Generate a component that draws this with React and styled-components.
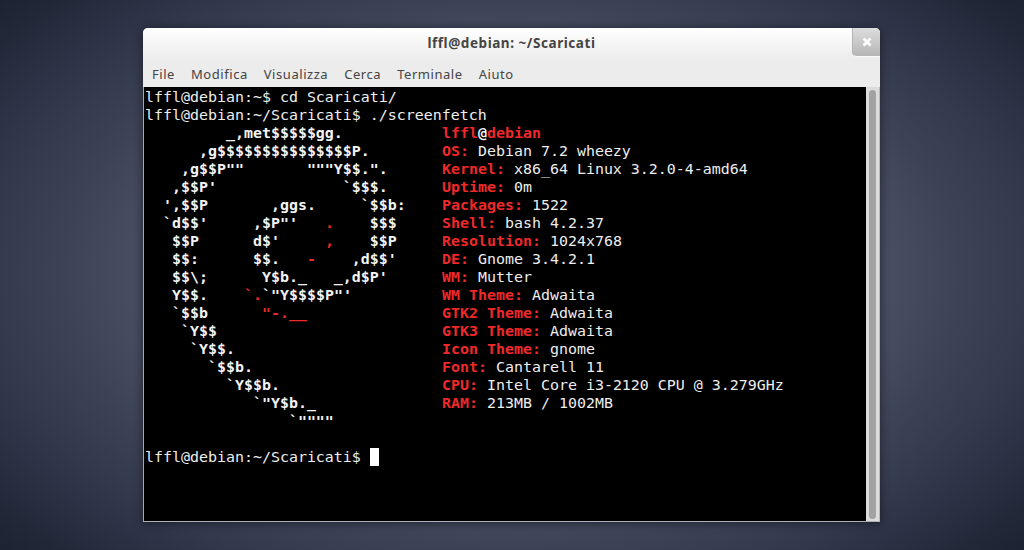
import React from "react";
import styled, { createGlobalStyle } from "styled-components";

const GlobalStyle = createGlobalStyle`
  html, body {
    margin: 0;
    padding: 0;
    width: 1024px;
    height: 550px;
    overflow: hidden;
  }
`;

// w = bold white (logo), r = bold red, n = normal terminal text
const ROWS = [
  { logo: [["w", "         _,met$$$$$gg."]], info: [["r", "lffl"], ["w", "@"], ["r", "debian"]] },
  { logo: [["w", "      ,g$$$$$$$$$$$$$$$P."]], info: [["r", "OS:"], ["n", " Debian 7.2 wheezy"]] },
  { logo: [["w", "    ,g$$P\"\"       \"\"\"Y$$.\"."]], info: [["r", "Kernel:"], ["n", " x86_64 Linux 3.2.0-4-amd64"]] },
  { logo: [["w", "   ,$$P'              `$$$."]], info: [["r", "Uptime:"], ["n", " 0m"]] },
  { logo: [["w", "  ',$$P       ,ggs.     `$$b:"]], info: [["r", "Packages:"], ["n", " 1522"]] },
  { logo: [["w", "  `d$$'     ,$P\"'   "], ["r", "."], ["w", "    $$$"]], info: [["r", "Shell:"], ["n", " bash 4.2.37"]] },
  { logo: [["w", "   $$P      d$'     "], ["r", ","], ["w", "    $$P"]], info: [["r", "Resolution:"], ["n", " 1024x768"]] },
  { logo: [["w", "   $$:      $$.   "], ["r", "-"], ["w", "    ,d$$'"]], info: [["r", "DE:"], ["n", " Gnome 3.4.2.1"]] },
  { logo: [["w", "   $$\\;      Y$b._   _,d$P'"]], info: [["r", "WM:"], ["n", " Mutter"]] },
  { logo: [["w", "   Y$$.    "], ["r", "`."], ["w", "`\"Y$$$$P\"'"]], info: [["r", "WM Theme:"], ["n", " Adwaita"]] },
  { logo: [["w", "   `$$b      "], ["r", "\"-.__"]], info: [["r", "GTK2 Theme:"], ["n", " Adwaita"]] },
  { logo: [["w", "    `Y$$"]], info: [["r", "GTK3 Theme:"], ["n", " Adwaita"]] },
  { logo: [["w", "     `Y$$."]], info: [["r", "Icon Theme:"], ["n", " gnome"]] },
  { logo: [["w", "       `$$b."]], info: [["r", "Font:"], ["n", " Cantarell 11"]] },
  { logo: [["w", "         `Y$$b."]], info: [["r", "CPU:"], ["n", " Intel Core i3-2120 CPU @ 3.279GHz"]] },
  { logo: [["w", "            `\"Y$b._"]], info: [["r", "RAM:"], ["n", " 213MB / 1002MB"]] },
  { logo: [["w", "                `\"\"\"\""]], info: [] },
];

const MENU = ["File", "Modifica", "Visualizza", "Cerca", "Terminale", "Aiuto"];

const Segments = ({ items }) =>
  items.map(([kind, text], i) => (
    <Chunk key={i} $kind={kind}>
      {text}
    </Chunk>
  ));

export default function App() {
  return (
    <Desktop>
      <GlobalStyle />
      <Window>
        <TitleBar>
          <Title>lffl@debian: ~/Scaricati</Title>
          <CloseButton>
            <svg width="10" height="10" viewBox="0 0 10 10">
              <path
                d="M1.5 1.5 L8.5 8.5 M8.5 1.5 L1.5 8.5"
                stroke="#fff"
                strokeWidth="2.8"
                fill="none"
              />
            </svg>
          </CloseButton>
        </TitleBar>
        <MenuBar>
          {MENU.map((item) => (
            <MenuItem key={item}>{item}</MenuItem>
          ))}
        </MenuBar>
        <Body>
          <Screen>
            <Line>
              <Chunk $kind="n">lffl@debian:~$ cd Scaricati/</Chunk>
            </Line>
            <Line>
              <Chunk $kind="n">lffl@debian:~/Scaricati$ ./screenfetch</Chunk>
            </Line>
            {ROWS.map((row, i) => (
              <Line key={i}>
                <LogoCell>
                  <Segments items={row.logo} />
                </LogoCell>
                <Segments items={row.info} />
              </Line>
            ))}
            <Line />
            <Line>
              <Chunk $kind="n">lffl@debian:~/Scaricati$ </Chunk>
              <Cursor />
            </Line>
          </Screen>
          <ScrollTrack>
            <ScrollThumb />
          </ScrollTrack>
        </Body>
      </Window>
    </Desktop>
  );
}

const Desktop = styled.div`
  box-sizing: border-box;
  width: 1024px;
  height: 550px;
  padding: 28px 144px 28px 143px;
  background: radial-gradient(
    ellipse 724px 440px at 50% 50%,
    #50586c 0%,
    #4b5267 48%,
    #3d4357 62%,
    #343a4e 72%,
    #232839 88%,
    #191e2e 100%
  );
`;

const Window = styled.div`
  display: flex;
  flex-direction: column;
  width: 737px;
  height: 494px;
  border-radius: 5px 5px 0 0;
  background: #ececec;
  box-shadow: 0 1px 8px 1px rgba(15, 18, 30, 0.6);
`;

const TitleBar = styled.div`
  position: relative;
  display: flex;
  align-items: center;
  justify-content: center;
  height: 31px;
  padding-bottom: 1px;
  box-sizing: border-box;
  border-radius: 5px 5px 0 0;
  background: linear-gradient(#ffffff, #ececec);
`;

const Title = styled.div`
  font-family: "Noto Sans", sans-serif;
  font-size: 13.5px;
  font-weight: 700;
  letter-spacing: 0.55px;
  color: #444444;
`;

const CloseButton = styled.div`
  position: absolute;
  top: 0;
  right: 0;
  display: flex;
  align-items: center;
  justify-content: center;
  width: 28px;
  height: 29px;
  box-sizing: border-box;
  border-radius: 0 5px 0 5px;
  border-left: 1px solid #b4b4b4;
  border-bottom: 1px solid #fafafa;
  background: linear-gradient(#dcdcdc, #b6b6b6);
`;

const MenuBar = styled.div`
  display: flex;
  align-items: center;
  gap: 16px;
  height: 28px;
  padding: 2px 0 0 9px;
  box-sizing: border-box;
  background: #ececec;
`;

const MenuItem = styled.div`
  font-family: "Noto Sans", sans-serif;
  font-size: 13px;
  letter-spacing: 0.55px;
  color: #444444;
`;

const Body = styled.div`
  flex: 1;
  display: flex;
  min-height: 0;
  border-left: 1px solid #a8a8a8;
  border-bottom: 1px solid #b0b0b0;
  border-right: 1px solid #b8b8b8;
`;

const Screen = styled.div`
  flex: 1;
  padding: 1px 0 0 1px;
  background: #000;
  overflow: hidden;
`;

const Line = styled.div`
  display: flex;
  height: 18px;
  line-height: 18px;
  font-family: "DejaVu Sans Mono", monospace;
  font-size: 14.95px;
  white-space: pre;
`;

const LogoCell = styled.div`
  display: flex;
  flex: none;
  width: 297px;
`;

const Chunk = styled.span`
  color: ${(p) => (p.$kind === "r" ? "#ef2929" : p.$kind === "w" ? "#f4f4f4" : "#eeeeec")};
  font-weight: ${(p) => (p.$kind === "n" ? 400 : 700)};
`;

const Cursor = styled.span`
  width: 9px;
  height: 18px;
  background: #ffffff;
`;

const ScrollTrack = styled.div`
  display: flex;
  justify-content: center;
  width: 13px;
  padding: 3px 0 2px;
  box-sizing: border-box;
  background: #dcdcdc;
`;

const ScrollThumb = styled.div`
  width: 7px;
  border-radius: 4px;
  background: #a2a2a2;
`;
